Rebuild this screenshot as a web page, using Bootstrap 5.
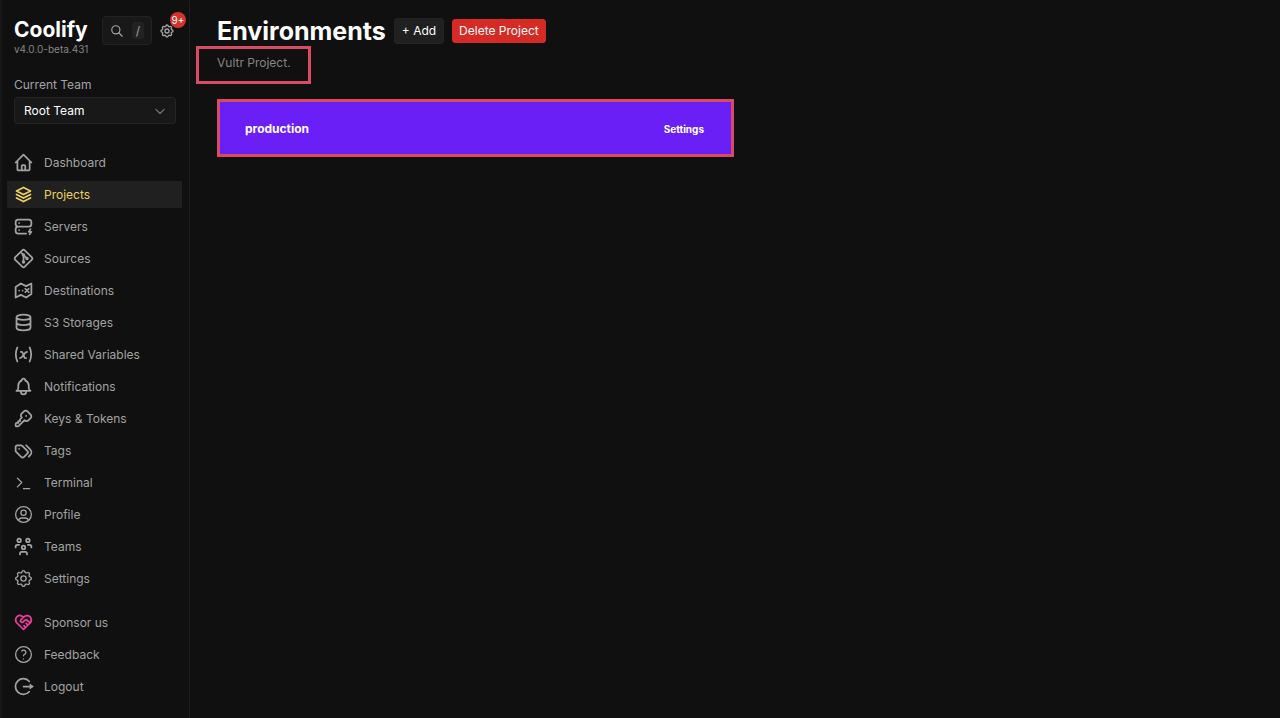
<!DOCTYPE html>
<html lang="en" data-bs-theme="dark">
<head>
<meta charset="utf-8">
<meta name="viewport" content="width=device-width, initial-scale=1">
<title>Environments | Coolify</title>
<link href="https://cdn.jsdelivr.net/npm/bootstrap@5.3.0/dist/css/bootstrap.min.css" rel="stylesheet">
<script src="https://cdn.jsdelivr.net/npm/bootstrap@5.3.0/dist/js/bootstrap.bundle.min.js" defer></script>
<style>
  body { font-family: Inter, "Liberation Sans", sans-serif; font-size: 12px; line-height: 20px; background: #101010; color: #a3a3a3; border-bottom: 2px solid #000; }
  svg { fill: none; stroke: currentColor; stroke-width: 2; stroke-linecap: round; stroke-linejoin: round; flex: none; }
  .fine { stroke-width: 1.5; }
  .sidebar { width: 190px; flex: none; border-left: 2px solid #171717; border-right: 1px solid #1e1e1e; padding: 16px 7px 14px 5px; }
  .side-head { padding: 0 0 0 7px; height: 42px; }
  .head-text { width: 77px; }
  .brand { font-size: 21px; line-height: 27px; font-weight: 700; color: #fff; }
  .version { font-size: 10px; line-height: 13px; color: #858585; }
  .search-btn { width: 50px; height: 29px; margin-left: 11px; background: #181818; border: 1px solid #222; border-radius: 4px; color: #a3a3a3; }
  .search-btn kbd { width: 12px; height: 17px; background: #222; color: #a3a3a3; font: inherit; font-size: 12px; line-height: 17px; border-radius: 3px; }
  .gear-btn { margin-top: 7px; margin-left: 7px; color: #a3a3a3; }
  .count { top: -11px; left: 11px; width: 16px; height: 16px; font-size: 10px; line-height: 16px; background: #d0342c; color: #fff; }
  .team { padding: 17px 0 0 7px; }
  .team label { margin-bottom: 2px; }
  .team-select { height: 27px; width: 162px; padding: 0 9px; font-size: 12px; color: #fff; background: #181818; border: 1px solid #242424; border-radius: 3px; appearance: none; }
  .team-arrow { right: 17px; top: 9px; color: #737380; pointer-events: none; }
  .menu { gap: 5px; margin-top: 25px; }
  .menu a { height: 27px; padding: 0 6px; gap: 10px; color: #a3a3a3; }
  .menu a:hover, .menu a.active { background: #202020; }
  .menu a.active { color: #ecd060; }
  .menu .later { margin-top: 12px; }
  .menu .sponsor-icon { color: #f03ca0; }
  main { padding: 16px 27px; }
  h1 { font-size: 25px; line-height: 30px; font-weight: 700; color: #fff; }
  .act { height: 26px; padding: 0 7px; font-size: 12px; line-height: 24px; border-radius: 3px; background: #202020; border: 1px solid #242424; color: #fff; }
  .act-danger { height: 24px; padding: 0 6px; line-height: 22px; background: #d52b24; border-color: #d52b24; }
  .desc { width: 115px; height: 38px; margin-left: -21px; padding: 4px 18px; border: 3px solid #d94a63; color: #858585; white-space: nowrap; }
  .env { width: 517px; max-width: 100%; height: 58px; margin-top: 15px; padding: 2px 27px 0 25px; border: 3px solid #d94a63; background: #6b1ff7; }
  .env a { color: #fff; font-weight: 700; }
  .env .env-set { font-size: 10px; }
</style>
</head>
<body>
<svg width="0" height="0" class="position-absolute" aria-hidden="true">
  <symbol id="gear" viewBox="0 0 24 24"><path d="M10.325 4.317c.426-1.756 2.924-1.756 3.35 0a1.724 1.724 0 0 0 2.573 1.066c1.543-.94 3.31.826 2.37 2.37a1.724 1.724 0 0 0 1.065 2.572c1.756.426 1.756 2.924 0 3.35a1.724 1.724 0 0 0-1.066 2.573c.94 1.543-.826 3.31-2.37 2.37a1.724 1.724 0 0 0-2.572 1.065c-.426 1.756-2.924 1.756-3.35 0a1.724 1.724 0 0 0-2.573-1.066c-1.543.94-3.31-.826-2.37-2.37a1.724 1.724 0 0 0-1.065-2.572c-1.756-.426-1.756-2.924 0-3.35a1.724 1.724 0 0 0 1.066-2.573c-.94-1.543.826-3.31 2.37-2.37c1 .608 2.296.07 2.572-1.065z"/><circle cx="12" cy="12" r="3"/></symbol>
</svg>
<div class="d-flex min-vh-100">
  <aside class="sidebar">
    <div class="side-head d-flex">
      <div class="head-text">
        <div class="brand">Coolify</div>
        <div class="version">v4.0.0-beta.431</div>
      </div>
      <button type="button" class="search-btn d-flex align-items-center justify-content-center gap-2 p-0" aria-label="Search">
        <svg width="14" height="14" viewBox="0 0 24 24"><circle cx="10" cy="10" r="7"/><path d="M21 21l-6-6"/></svg>
        <kbd class="p-0 text-center">/</kbd>
      </button>
      <button type="button" class="gear-btn btn p-0 border-0 position-relative d-flex align-self-start" aria-label="Updates">
        <svg width="16" height="16"><use href="#gear"/></svg>
        <span class="count position-absolute rounded-circle text-center">9+</span>
      </button>
    </div>
    <div class="team">
      <label for="team" class="d-block">Current Team</label>
      <div class="position-relative">
        <select id="team" class="team-select d-block"><option>Root Team</option></select>
        <svg class="team-arrow position-absolute" width="10" height="10" viewBox="0 0 12 12"><path class="fine" d="M1 4l5 5l5-5"/></svg>
      </div>
    </div>
    <nav>
      <ul class="menu list-unstyled d-flex flex-column mb-0">
        <li><a href="#" class="d-flex align-items-center text-decoration-none"><svg width="21" height="21" viewBox="0 0 24 24"><path d="M3 12l2-2m0 0l7-7l7 7M5 10v10a1 1 0 0 0 1 1h3m10-11l2 2m-2-2v10a1 1 0 0 1-1 1h-3m-6 0a1 1 0 0 0 1-1v-4a1 1 0 0 1 1-1h2a1 1 0 0 1 1 1v4a1 1 0 0 0 1 1m-6 0h6"/></svg>Dashboard</a></li>
        <li><a href="#" class="active d-flex align-items-center text-decoration-none" aria-current="page"><svg width="21" height="21" viewBox="0 0 24 24"><path d="M12 4L4 8l8 4l8-4zM4 12l8 4l8-4M4 16l8 4l8-4"/></svg>Projects</a></li>
        <li><a href="#" class="d-flex align-items-center text-decoration-none"><svg width="21" height="21" viewBox="0 0 24 24"><path d="M3 7a3 3 0 0 1 3-3h12a3 3 0 0 1 3 3v2a3 3 0 0 1-3 3H6a3 3 0 0 1-3-3zM15 20H6a3 3 0 0 1-3-3v-2a3 3 0 0 1 3-3h12M7 8v.01M7 16v.01M20 15l-2 3h3l-2 3"/></svg>Servers</a></li>
        <li><a href="#" class="d-flex align-items-center text-decoration-none"><svg width="21" height="21" viewBox="0 0 24 24"><circle cx="16" cy="12" r="1"/><circle cx="12" cy="8" r="1"/><circle cx="12" cy="16" r="1"/><path d="M12 15V9M15 11l-2-2M11 7L9.100 5.100M13.446 2.600l7.955 7.954a2.045 2.045 0 0 1 0 2.892l-7.955 7.955a2.045 2.045 0 0 1-2.892 0l-7.955-7.955a2.045 2.045 0 0 1 0-2.892l7.955-7.955a2.045 2.045 0 0 1 2.892 0z"/></svg>Sources</a></li>
        <li><a href="#" class="d-flex align-items-center text-decoration-none"><svg width="21" height="21" viewBox="0 0 24 24"><path d="M9 4L3 8v12l6-3l6 3l6-4V4l-6 3zM7 12v.01M11 12v.01M14 10l4 4M18 10l-4 4"/></svg>Destinations</a></li>
        <li><a href="#" class="d-flex align-items-center text-decoration-none"><svg width="21" height="21" viewBox="0 0 24 24"><path d="M4 6a8 3 0 1 0 16 0A8 3 0 1 0 4 6v6a8 3 0 0 0 16 0V6M4 12v6a8 3 0 0 0 16 0v-6"/></svg>S3 Storages</a></li>
        <li><a href="#" class="d-flex align-items-center text-decoration-none"><svg width="21" height="21" viewBox="0 0 24 24"><path d="M5 4C2.500 9 2.500 14 5 20M19 4c2.500 5 2.500 10 0 16M9 9h1c1 0 1 1 2.016 3.527C13 15 13 16 14 16h1M8 16c1.500 0 3-2 4-3.500S14.500 9 16 9"/></svg>Shared Variables</a></li>
        <li><a href="#" class="d-flex align-items-center text-decoration-none"><svg width="21" height="21" viewBox="0 0 24 24"><path d="M10 5a2 2 0 1 1 4 0a7 7 0 0 1 4 6v3a4 4 0 0 0 2 3H4a4 4 0 0 0 2-3v-3a7 7 0 0 1 4-6M9 17v1a3 3 0 0 0 6 0v-1"/></svg>Notifications</a></li>
        <li><a href="#" class="d-flex align-items-center text-decoration-none"><svg width="21" height="21" viewBox="0 0 24 24"><path d="M16.555 3.843l3.602 3.602a2.877 2.877 0 0 1 0 4.069l-2.643 2.643a2.877 2.877 0 0 1-4.069 0l-.301-.301l-6.558 6.558a2 2 0 0 1-1.239.578L5.172 21H4a1 1 0 0 1-.993-.883L3 20v-1.172a2 2 0 0 1 .467-1.284l.119-.13L4 17h2v-2h2v-2l2.144-2.144l-.301-.301a2.877 2.877 0 0 1 0-4.069l2.643-2.643a2.877 2.877 0 0 1 4.069 0zM15 9h.01"/></svg>Keys &amp; Tokens</a></li>
        <li><a href="#" class="d-flex align-items-center text-decoration-none"><svg width="21" height="21" viewBox="0 0 24 24"><path d="M3 8v4.172a2 2 0 0 0 .586 1.414l5.710 5.710a2.410 2.410 0 0 0 3.408 0l3.592-3.592a2.410 2.410 0 0 0 0-3.408l-5.710-5.710A2 2 0 0 0 9.172 6H5a2 2 0 0 0-2 2M18 19l1.592-1.592a4.820 4.820 0 0 0 0-6.816L15 6M7 10h-.01"/></svg>Tags</a></li>
        <li><a href="#" class="d-flex align-items-center text-decoration-none"><svg width="21" height="21" viewBox="0 0 24 24" class="fine"><path d="M5 7l5 5l-5 5M12 19h7"/></svg>Terminal</a></li>
        <li><a href="#" class="d-flex align-items-center text-decoration-none"><svg width="21" height="21" viewBox="0 0 24 24" class="fine"><circle cx="12" cy="12" r="9"/><circle cx="12" cy="10" r="3"/><path d="M6.168 18.849A4 4 0 0 1 10 16h4a4 4 0 0 1 3.834 2.855"/></svg>Profile</a></li>
        <li><a href="#" class="d-flex align-items-center text-decoration-none"><svg width="21" height="21" viewBox="0 0 24 24"><circle cx="12" cy="13" r="2"/><circle cx="17" cy="5" r="2"/><circle cx="7" cy="5" r="2"/><path d="M8 21v-1a2 2 0 0 1 2-2h4a2 2 0 0 1 2 2v1M17 10h2a2 2 0 0 1 2 2v1M3 13v-1a2 2 0 0 1 2-2h2"/></svg>Teams</a></li>
        <li><a href="#" class="d-flex align-items-center text-decoration-none"><svg width="21" height="21" class="fine"><use href="#gear"/></svg>Settings</a></li>
        <li class="later"><a href="#" class="d-flex align-items-center text-decoration-none"><svg class="sponsor-icon" width="21" height="21" viewBox="0 0 24 24"><path d="M19.500 12.572L12 20l-7.500-7.428A5 5 0 1 1 12 6.006a5 5 0 1 1 7.500 6.572M12 6L8.707 9.293a1 1 0 0 0 0 1.414l.543.543c.690.690 1.810.690 2.500 0l1-1a3.182 3.182 0 0 1 4.500 0l2.250 2.250M12.500 15.500l2 2M15 13l2 2"/></svg>Sponsor us</a></li>
        <li><a href="#" class="d-flex align-items-center text-decoration-none"><svg width="21" height="21" viewBox="0 0 24 24" class="fine"><circle cx="12" cy="12" r="9"/><path d="M12 17v.01M12 13.500a1.500 1.500 0 0 1 1-1.500a2.600 2.600 0 1 0-3-4"/></svg>Feedback</a></li>
        <li><a href="#" class="d-flex align-items-center text-decoration-none"><svg width="21" height="21" viewBox="0 0 24 24"><path d="M18.500 6a9 9 0 1 0 0 12M12 12h8"/><path d="M19 8.500l5 3.500l-5 3.500z" fill="currentColor" stroke="none"/></svg>Logout</a></li>
      </ul>
    </nav>
  </aside>
  <main class="flex-grow-1">
    <div class="d-flex align-items-center">
      <h1 class="mb-0">Environments</h1>
      <button type="button" class="act ms-2">+ Add</button>
      <button type="button" class="act act-danger ms-2">Delete Project</button>
    </div>
    <div class="desc">Vultr Project.</div>
    <div class="env d-flex align-items-center justify-content-between">
      <a href="#" class="text-decoration-none">production</a>
      <a href="#" class="env-set text-decoration-none">Settings</a>
    </div>
  </main>
</div>
</body>
</html>
